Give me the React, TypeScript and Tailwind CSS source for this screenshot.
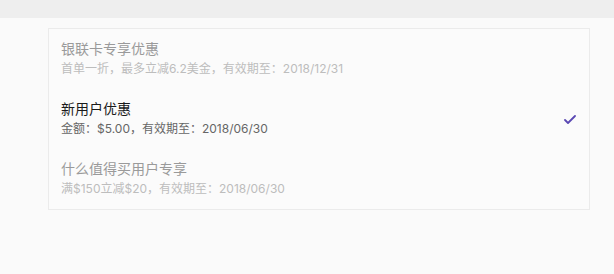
import React from 'react';

interface Coupon {
    title: string;
    detail: string;
    active?: boolean;
    disabled?: boolean;
}

const coupons: Coupon[] = [
    { title: '银联卡专享优惠', detail: '首单一折，最多立减6.2美金，有效期至：2018/12/31', disabled: true },
    { title: '新用户优惠', detail: '金额：$5.00，有效期至：2018/06/30', active: true },
    { title: '什么值得买用户专享', detail: '满$150立减$20，有效期至：2018/06/30', disabled: true },
];

function Check() {
    return (
        <svg width="12" height="9" viewBox="0 0 12 9" fill="none">
            <path d="M1 5 L4 8 L11 1" stroke="#5a48b3" strokeWidth="1.8" strokeLinecap="round" strokeLinejoin="round" />
        </svg>
    );
}

export default function App() {
    return (
        <div
            className="w-[614px] h-[274px] bg-[#fafafa] overflow-hidden"
            style={{ fontFamily: 'Inter, "Noto Sans CJK SC", sans-serif' }}
        >
            <div className="h-[18px] bg-[#eeeeee]" />
            <div className="pt-[10px] pl-[48px] pr-[24px]">
                <div className="w-[542px] border border-[#ebebeb] bg-[#fbfbfb]">
                    {coupons.map((c) => (
                        <div key={c.title} className="flex items-center justify-between py-[10px] pl-[12px] pr-[13px]">
                            <div>
                                <div
                                    className={`text-[14px] leading-[20px] ${c.disabled ? 'text-[#9a9a9a]' : 'text-[#1a1a1a]'}`}
                                >
                                    {c.title}
                                </div>
                                <div
                                    className={`text-[12px] leading-[20px] ${c.disabled ? 'text-[#bdbdbd]' : 'text-[#666666]'}`}
                                >
                                    {c.detail}
                                </div>
                            </div>
                            {c.active && <Check />}
                        </div>
                    ))}
                </div>
            </div>
        </div>
    );
}
